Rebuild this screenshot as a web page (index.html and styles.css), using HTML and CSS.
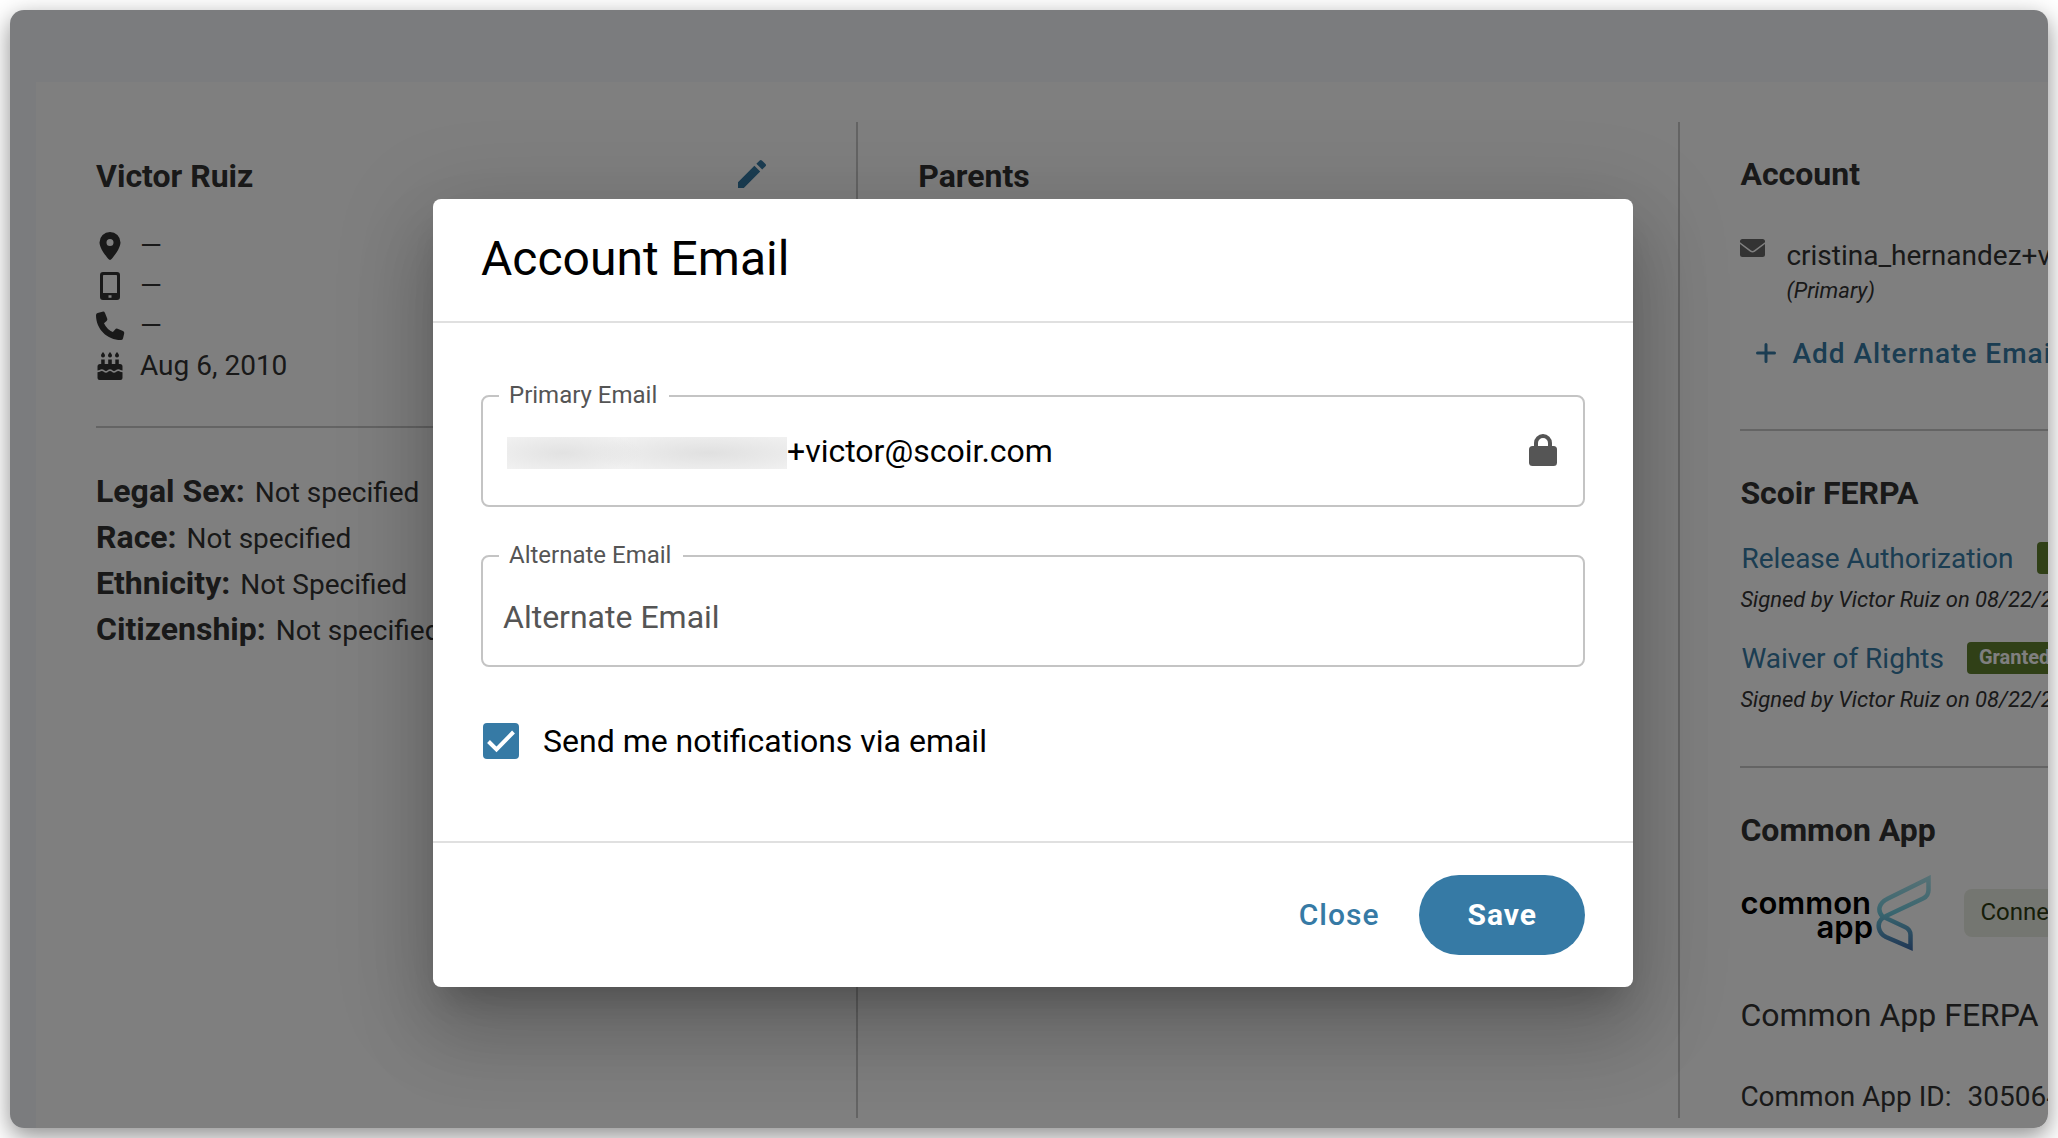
FILE: index.html
```
<!DOCTYPE html>
<html lang="en">
<head>
  <meta charset="UTF-8" />
  <meta name="viewport" content="width=device-width, initial-scale=1.0"/>
  <title>Account Email</title>
  <link rel="stylesheet" href="styles.css">
</head>
<body>

  <div class="window">

    <main class="card">

      <section class="column">
        <div class="column-header">
          <h2>Victor Ruiz</h2>
          <button class="edit-button" type="button" aria-label="Edit profile">
            <svg class="icon" viewBox="0 0 28 28"><path d="M0 22.2V28h5.800L22.200 11.600 16.400 5.800zM27.500 6.300a1.600 1.600 0 0 0 0-2.200L23.900.5a1.600 1.600 0 0 0-2.200 0L18.400 3.800l5.800 5.800z"/></svg>
          </button>
        </div>

        <ul class="contact-list">
          <li>
            <svg class="icon" viewBox="0 0 28 28"><path fill-rule="evenodd" d="M14 0a10.500 10.500 0 0 0-10.500 10.500C3.500 16.500 11 25.500 13 27.600q1 .8 2 0C17 25.500 24.500 16.500 24.500 10.500A10.500 10.500 0 0 0 14 0zm0 7a3.500 3.500 0 1 1 0 7 3.500 3.500 0 0 1 0-7z"/></svg>
            <span>—</span>
          </li>
          <li>
            <svg class="icon" viewBox="0 0 28 28"><path fill-rule="evenodd" d="M7 0h14a3 3 0 0 1 3 3v22a3 3 0 0 1-3 3H7a3 3 0 0 1-3-3V3a3 3 0 0 1 3-3zm.8 3a.8.8 0 0 0-.8.8V21h14V3.800a.8.8 0 0 0-.8-.8zM12.500 23.300v2.400h3v-2.400z"/></svg>
            <span>—</span>
          </li>
          <li>
            <svg class="icon" viewBox="0 0 28 28"><path d="M9 1a2.200 2.200 0 0 0-2.600-1.300L1.600 1A2.200 2.200 0 0 0 0 3.200C0 17 11.100 28 24.800 28a2.200 2.200 0 0 0 2.200-1.600l1.200-4.800a2.200 2.200 0 0 0-1.200-2.500l-5.400-2.300a2.200 2.200 0 0 0-2.500.6l-2.200 2.700A18 18 0 0 1 8 11.200L10.600 9a2.200 2.200 0 0 0 .6-2.500z"/></svg>
            <span>—</span>
          </li>
          <li>
            <svg class="icon" viewBox="0 0 28 28"><path d="M7 0c1.200 1.500 2 2.600 2 3.600a2 2 0 0 1-4 0C5 2.600 5.800 1.500 7 0zm7 0c1.200 1.500 2 2.600 2 3.600a2 2 0 0 1-4 0c0-1 .8-2.100 2-3.600zm7 0c1.200 1.500 2 2.600 2 3.600a2 2 0 0 1-4 0c0-1 .8-2.100 2-3.600zM5.200 7.500h3.500V12h3.500V7.500h3.600V12h3.500V7.500h3.500V12H24a2.500 2.500 0 0 1 2.500 2.500v4c-1.500 0-2.300-1.300-4.200-1.300S19.700 18.900 18 18.900s-2.200-1.700-4-1.700-2.400 1.700-4 1.700-2.300-1.700-4.200-1.700-2.600 1.300-4.300 1.300v-4A2.500 2.500 0 0 1 4 12h1.200zM1.500 20.300c2 0 2.800-1.300 4.300-1.300s2.400 1.700 4.200 1.700 2.300-1.700 4-1.700 2.200 1.700 4 1.700 2.800-1.700 4.300-1.700 2.200 1.300 4.200 1.300V26a2 2 0 0 1-2 2h-21a2 2 0 0 1-2-2z"/></svg>
            <span>Aug 6, 2010</span>
          </li>
        </ul>

        <hr class="divider first">

        <dl class="details">
          <div><dt>Legal Sex:</dt><dd>Not specified</dd></div>
          <div><dt>Race:</dt><dd>Not specified</dd></div>
          <div><dt>Ethnicity:</dt><dd>Not Specified</dd></div>
          <div><dt>Citizenship:</dt><dd>Not specified</dd></div>
        </dl>
      </section>

      <section class="column">
        <div class="column-header">
          <h2>Parents</h2>
        </div>
      </section>

      <section class="column">
        <h2>Account</h2>
        <div class="account-email">
          <svg class="mail-icon" viewBox="0 0 25 18"><path d="M0 3.200V2.500A2.500 2.500 0 0 1 2.500 0h20A2.500 2.500 0 0 1 25 2.500v.7l-10.800 8.100q-1.700 1.200-3.400 0z"/><path d="M0 5.100V15.500A2.500 2.500 0 0 0 2.500 18h20a2.500 2.500 0 0 0 2.500-2.500V5.100l-10.200 7.600q-2.300 1.600-4.600 0z"/></svg>
          <div>
            <div class="address">cristina_hernandez+victor@scoir.com</div>
            <div class="note">(Primary)</div>
          </div>
        </div>
        <button class="add-button" type="button">
          <svg class="plus-icon" viewBox="0 0 20 20"><path d="M10 1.500v17M1.500 10h17"/></svg>
          Add Alternate Email
        </button>

        <hr class="divider">

        <h2>Scoir FERPA</h2>
        <div class="ferpa-item">
          <div class="ferpa-row"><a href="#">Release Authorization</a><span class="badge">Granted</span></div>
          <div class="note">Signed by Victor Ruiz on 08/22/2024</div>
        </div>
        <div class="ferpa-item">
          <div class="ferpa-row"><a href="#">Waiver of Rights</a><span class="badge">Granted</span></div>
          <div class="note">Signed by Victor Ruiz on 08/22/2024</div>
        </div>

        <hr class="divider">

        <h2>Common App</h2>
        <div class="common-app">
          <svg class="common-logo" viewBox="0 0 192 76" role="img" aria-label="common app">
            <defs>
              <linearGradient id="ribbon" gradientUnits="userSpaceOnUse" x1="0" y1="0" x2="0" y2="76">
                <stop offset="0" stop-color="#afe4ec"/>
                <stop offset="0.5" stop-color="#73ccdf"/>
                <stop offset="1" stop-color="#3e6ba9"/>
              </linearGradient>
            </defs>
            <text x="131" y="39" text-anchor="end">common</text>
            <text x="133" y="63" text-anchor="end">app</text>
            <path class="ribbon" d="M188.500 3.500 148 23.500C138 28.500 137.500 36 142.500 41.500L165 52Q170.500 54.500 170.500 60V72.500L146 62C138 58 137 49 141 44.500Q143 42.300 147 40.500L183 23.500Q188.500 21 188.500 15z"/>
          </svg>
          <span class="chip">Connected</span>
        </div>
        <h3>Common App FERPA</h3>
        <div class="app-id"><span>Common App ID:</span><span>30506421</span></div>
      </section>

    </main>

    <div class="overlay">
      <form class="modal" role="dialog" aria-labelledby="modal-title">
        <header class="modal-header">
          <h1 id="modal-title">Account Email</h1>
        </header>

        <div class="modal-body">
          <div class="field">
            <label for="primary-email">Primary Email</label>
            <span class="redacted"></span>
            <input id="primary-email" type="text" value="+victor@scoir.com" readonly>
            <svg class="lock-icon" viewBox="0 0 28 32"><path d="M7 14V9a7 7 0 0 1 14 0V14"/><rect y="12" width="28" height="20" rx="3.500"/></svg>
          </div>

          <div class="field alternate">
            <label for="alternate-email">Alternate Email</label>
            <input id="alternate-email" type="email" placeholder="Alternate Email">
          </div>

          <label class="notify">
            <input type="checkbox" checked>
            <svg viewBox="0 0 36 36"><path d="M5.500 18.500l8 8L30.500 9"/></svg>
            <span>Send me notifications via email</span>
          </label>
        </div>

        <footer class="modal-footer">
          <button class="close-button" type="button">Close</button>
          <button class="save-button" type="button">Save</button>
        </footer>
      </form>
    </div>

  </div>

</body>
</html>
```
FILE: styles.css
```
* {
  box-sizing: border-box;
}

body {
  margin: 0;
  padding: 10px;
  height: 100vh;
  font-family: Roboto, "Liberation Sans", sans-serif;
  font-size: 28px;
  color: #333;
  background-color: #fff;
  overflow: hidden;
}

h1, h2, h3, ul, dl, dd {
  margin: 0;
  padding: 0;
}

button {
  font-family: inherit;
  border: 0;
  background: none;
  padding: 0;
  cursor: pointer;
}

.window {
  position: relative;
  height: 100%;
  padding: 72px 0 0 26px;
  border-radius: 14px;
  background-color: #f6f8fc;
  box-shadow: 0 8px 24px rgba(0, 0, 0, 0.45);
  overflow: hidden;
}

.card {
  display: flex;
  width: max-content;
  height: 100%;
  padding: 40px 0 10px;
  background-color: #fff;
}

/* columns */

.column {
  flex: none;
  width: calc(40vw - 1px);
  padding: 32px 58px 0 60px;
  border-right: 2px solid #c8c8c8;
}

.column:last-child {
  border-right: 0;
}

h2 {
  font-size: 32px;
  line-height: 40px;
  font-weight: 700;
  margin-bottom: 25px;
}

.column-header {
  display: flex;
  align-items: center;
  justify-content: space-between;
  height: 44px;
}

.column-header h2 {
  margin: 0;
}

.icon {
  display: block;
  width: 28px;
  height: 28px;
  fill: currentColor;
  overflow: visible;
}

.edit-button {
  padding: 0 32px 4px;
  color: #367aa5;
}

.contact-list {
  list-style: none;
  margin-top: 28px;
}

.contact-list li {
  display: flex;
  align-items: center;
  gap: 16px;
  line-height: 40px;
}

.divider {
  margin: 44px 0 42px;
  border: 0;
  border-top: 2px solid #c8c8c8;
}

.divider.first {
  margin: 40px 0;
}

.details div {
  display: flex;
  align-items: baseline;
  gap: 10px;
}

.details dt {
  font-size: 32px;
  line-height: 46px;
  font-weight: 700;
}

.details dd {
  line-height: 40px;
}

/* account column */

.account-email {
  display: flex;
  gap: 21px;
  margin-top: 45px;
}

.mail-icon {
  width: 25px;
  height: 18px;
  fill: #666;
}

.address {
  line-height: 34px;
}

.note {
  font-size: 22px;
  line-height: 36px;
  font-style: italic;
}

.add-button {
  display: flex;
  align-items: center;
  gap: 16px;
  height: 64px;
  margin-top: 12px;
  padding-left: 16px;
  font-size: 28px;
  font-weight: 500;
  letter-spacing: 1px;
  color: #367aa5;
  white-space: nowrap;
}

.plus-icon {
  width: 20px;
  height: 20px;
  fill: none;
  stroke: currentColor;
  stroke-width: 3;
  stroke-linecap: round;
}

.ferpa-item {
  margin-bottom: 16px;
}

.ferpa-item:last-of-type {
  margin-bottom: 0;
}

.ferpa-item .note {
  line-height: 44px;
}

.ferpa-row {
  display: flex;
  align-items: center;
  gap: 23px;
  height: 40px;
}

.ferpa-row a {
  padding-left: 1px;
  color: #367aa5;
  text-decoration: none;
}

.badge {
  height: 32px;
  padding: 0 12px;
  border-radius: 4px;
  font-size: 20px;
  line-height: 30px;
  font-weight: 700;
  color: #fff;
  background-color: #61802e;
}

.common-app {
  display: flex;
  align-items: center;
  gap: 32px;
}

.common-logo {
  width: 192px;
  height: 76px;
}

.common-logo text {
  font-family: Inter, sans-serif;
  font-size: 31px;
  font-weight: 600;
  fill: #000;
}

.ribbon {
  fill: none;
  stroke: url(#ribbon);
  stroke-width: 4.5;
}

.chip {
  height: 48px;
  padding: 0 16px;
  border-radius: 8px;
  font-size: 24px;
  line-height: 46px;
  color: #2c3a10;
  background-color: #e9ede2;
}

h3 {
  margin: 44px 0 42px;
  font-size: 32px;
  line-height: 40px;
  font-weight: 400;
}

.app-id {
  display: flex;
  gap: 16px;
  line-height: 40px;
}

/* modal */

.overlay {
  position: absolute;
  inset: 0;
  display: flex;
  align-items: center;
  justify-content: center;
  padding: 48px 0 0 8px;
  background-color: rgba(0, 0, 0, 0.5);
}

.modal {
  width: 1200px;
  max-width: 90%;
  border-radius: 8px;
  background-color: #fff;
  color: #000;
  box-shadow: 0 22px 30px -14px rgba(0, 0, 0, 0.2),
    0 48px 76px 6px rgba(0, 0, 0, 0.14),
    0 18px 92px 16px rgba(0, 0, 0, 0.12);
}

.modal-header {
  padding: 32px 48px 34px;
  border-bottom: 2px solid #e0e0e0;
}

h1 {
  font-size: 48px;
  line-height: 56px;
  font-weight: 400;
}

.modal-body {
  padding: 72px 48px 82px;
}

.field {
  position: relative;
  display: flex;
  align-items: center;
  height: 112px;
  margin-bottom: 48px;
  padding: 0 26px 0 24px;
  border: 2px solid #c4c4c4;
  border-radius: 8px;
}

.field.alternate {
  margin-bottom: 56px;
  padding: 12px 20px 0;
}

/* label sits on top of the border */
.field label {
  position: absolute;
  top: -18px;
  left: 16px;
  padding: 0 12px 0 10px;
  font-size: 24px;
  line-height: 32px;
  color: #555;
  background-color: #fff;
}

.field input {
  flex: 1;
  min-width: 0;
  height: 48px;
  padding: 0;
  border: 0;
  outline: 0;
  font-family: inherit;
  font-size: 32px;
  color: #000;
  background: none;
}

.field input::placeholder {
  color: #555;
  opacity: 1;
}

.redacted {
  width: 280px;
  height: 32px;
  margin-top: 4px;
  background: radial-gradient(ellipse 80px 22px at 20% 50%, #e2e2e2, transparent),
    radial-gradient(ellipse 120px 22px at 72% 50%, #e0e0e0, transparent),
    #f1f1f1;
}

.lock-icon {
  width: 28px;
  height: 32px;
  margin-bottom: 2px;
  fill: #555;
}

.lock-icon path {
  fill: none;
  stroke: #555;
  stroke-width: 4;
}

.notify {
  display: flex;
  align-items: center;
  position: relative;
  gap: 24px;
  height: 36px;
  padding-left: 2px;
  font-size: 32px;
}

.notify input {
  appearance: none;
  width: 36px;
  height: 36px;
  margin: 0;
  border-radius: 4px;
  background-color: #367aa5;
}

.notify svg {
  position: absolute;
  top: 0;
  left: 2px;
  width: 36px;
  height: 36px;
  fill: none;
  stroke: #fff;
  stroke-width: 4;
  pointer-events: none;
}

.modal-footer {
  display: flex;
  align-items: center;
  justify-content: flex-end;
  gap: 40px;
  padding: 32px 48px;
  border-top: 2px solid #e0e0e0;
}

.close-button, .save-button {
  height: 80px;
  padding-bottom: 2px;
  font-size: 30px;
  font-weight: 500;
  letter-spacing: 1px;
  color: #367aa5;
}

.save-button {
  padding: 0 48px 2px;
  border-radius: 40px;
  font-weight: 700;
  color: #fff;
  background-color: #367aa5;
}
```
